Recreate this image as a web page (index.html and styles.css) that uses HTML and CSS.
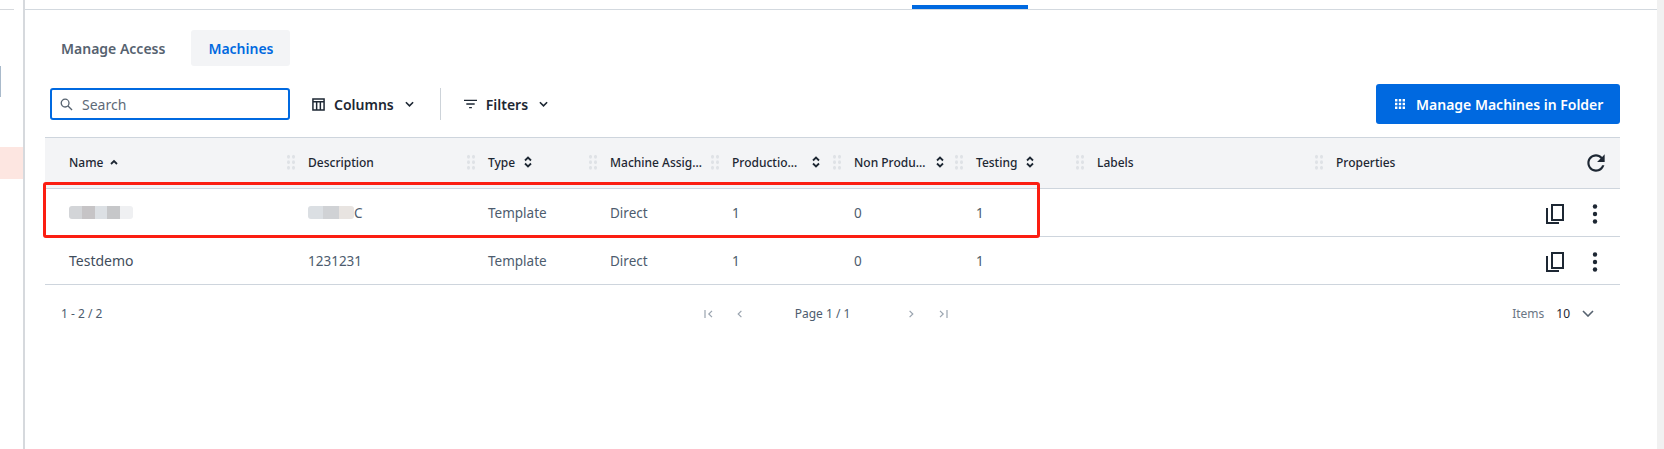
FILE: index.html
```html
<!DOCTYPE html>
<html lang="en">
<head>
<meta charset="utf-8">
<title>Machines</title>
<link rel="stylesheet" href="styles.css">
</head>
<body>
<div class="app">
  <aside class="rail">
    <div class="rail-line"></div>
    <div class="rail-mark"></div>
    <div class="rail-item"></div>
  </aside>
  <main class="main">
    <div class="topbar"><span class="top-tab"></span></div>
    <div class="content">
      <nav class="tabs">
        <span class="tab">Manage Access</span>
        <span class="tab tab-active">Machines</span>
      </nav>
      <div class="toolbar">
        <label class="search">
          <svg class="ic-search" viewBox="0 0 14 14"><circle cx="5.5" cy="5.5" r="4.2"/><path d="M8.6 8.6 13 13"/></svg>
          <span>Search</span>
        </label>
        <button class="tool tool-columns">
          <svg class="ic-columns" viewBox="0 0 14 14"><path d="M1 1h12v12H1zM1 4h12M5 4v9M9 4v9"/></svg>
          <span>Columns</span>
          <svg class="ic-chev" viewBox="0 0 10 6"><path d="M1 1l4 4 4-4"/></svg>
        </button>
        <span class="divider"></span>
        <button class="tool tool-filters">
          <svg class="ic-filter" viewBox="0 0 14 10"><path d="M0 1h14M2.5 5h9M5.5 9h3"/></svg>
          <span>Filters</span>
          <svg class="ic-chev" viewBox="0 0 10 6"><path d="M1 1l4 4 4-4"/></svg>
        </button>
        <button class="primary">
          <svg class="ic-grid" viewBox="0 0 10 10"><path d="M0 0h2.4v2.4H0zM3.8 0h2.4v2.4H3.8zM7.6 0H10v2.4H7.6zM0 3.8h2.4v2.4H0zM3.8 3.8h2.4v2.4H3.8zM7.6 3.8H10v2.4H7.6zM0 7.6h2.4V10H0zM3.8 7.6h2.4V10H3.8zM7.6 7.6H10V10H7.6z"/></svg>
          <span>Manage Machines in Folder</span>
        </button>
      </div>
      <div class="table">
        <div class="row head">
          <div class="cell first"><span>Name</span><svg class="ic-up" viewBox="0 0 8 6"><path d="M1 5l3-3 3 3"/></svg></div>
          <div class="cell hcell"><i class="handle"></i><span>Description</span></div>
          <div class="cell hcell"><i class="handle"></i><span>Type</span><svg class="ic-sort" viewBox="0 0 8 12"><path d="M1 4.5 4 1.5l3 3M1 7.5l3 3 3-3"/></svg></div>
          <div class="cell hcell"><i class="handle"></i><span class="trunc w-machine">Machine Assignment</span></div>
          <div class="cell hcell"><i class="handle"></i><span class="trunc w-prod">Production Machines</span><svg class="ic-sort" viewBox="0 0 8 12"><path d="M1 4.5 4 1.5l3 3M1 7.5l3 3 3-3"/></svg></div>
          <div class="cell hcell"><i class="handle"></i><span class="trunc w-non">Non Production Machines</span><svg class="ic-sort" viewBox="0 0 8 12"><path d="M1 4.5 4 1.5l3 3M1 7.5l3 3 3-3"/></svg></div>
          <div class="cell hcell"><i class="handle"></i><span>Testing</span><svg class="ic-sort" viewBox="0 0 8 12"><path d="M1 4.5 4 1.5l3 3M1 7.5l3 3 3-3"/></svg></div>
          <div class="cell hcell"><i class="handle"></i><span>Labels</span></div>
          <div class="cell hcell"><i class="handle"></i><span>Properties</span></div>
          <div class="cell actions">
            <svg class="ic-refresh" viewBox="0 0 24 24"><path d="M17.65 6.35C16.2 4.9 14.21 4 12 4c-4.42 0-7.99 3.58-7.99 8s3.57 8 7.99 8c3.73 0 6.84-2.55 7.73-6h-2.08c-.82 2.33-3.04 4-5.65 4-3.31 0-6-2.69-6-6s2.69-6 6-6c1.66 0 3.14.69 4.22 1.78L13 11h7V4l-2.35 2.35z"/></svg>
          </div>
        </div>
        <div class="row body">
          <div class="cell first"><span class="blur blur-name"><b></b><b></b><b></b><b></b><b></b></span></div>
          <div class="cell"><span class="desc-blur"><span class="blur blur-desc"><b></b><b></b><b></b></span><span>C</span></span></div>
          <div class="cell">Template</div>
          <div class="cell">Direct</div>
          <div class="cell">1</div>
          <div class="cell">0</div>
          <div class="cell">1</div>
          <div class="cell"></div>
          <div class="cell"></div>
          <div class="cell actions row-actions">
            <svg class="ic-copy" viewBox="0 0 18 20"><path d="M6 1h11v15H6zM1 4v15h12"/></svg>
            <svg class="ic-more" viewBox="0 0 6 20"><circle cx="3" cy="2.5" r="2.2"/><circle cx="3" cy="10" r="2.2"/><circle cx="3" cy="17.5" r="2.2"/></svg>
          </div>
        </div>
        <div class="row body">
          <div class="cell first name">Testdemo</div>
          <div class="cell">1231231</div>
          <div class="cell">Template</div>
          <div class="cell">Direct</div>
          <div class="cell">1</div>
          <div class="cell">0</div>
          <div class="cell">1</div>
          <div class="cell"></div>
          <div class="cell"></div>
          <div class="cell actions row-actions">
            <svg class="ic-copy" viewBox="0 0 18 20"><path d="M6 1h11v15H6zM1 4v15h12"/></svg>
            <svg class="ic-more" viewBox="0 0 6 20"><circle cx="3" cy="2.5" r="2.2"/><circle cx="3" cy="10" r="2.2"/><circle cx="3" cy="17.5" r="2.2"/></svg>
          </div>
        </div>
        <div class="highlight"></div>
      </div>
      <footer class="pager">
        <span class="range">1 - 2 / 2</span>
        <div class="pages">
          <svg class="ic-page" viewBox="0 0 9 8"><path d="M1 0v8M8 .8 4.8 4 8 7.2"/></svg>
          <svg class="ic-page prev" viewBox="0 0 5 8"><path d="M4.4.8 1.2 4l3.2 3.2"/></svg>
          <span class="page-label">Page 1 / 1</span>
          <svg class="ic-page next" viewBox="0 0 5 8"><path d="M.6.8 3.8 4 .6 7.2"/></svg>
          <svg class="ic-page" viewBox="0 0 9 8"><path d="M8 0v8M1 .8 4.2 4 1 7.2"/></svg>
        </div>
        <div class="items">
          <span class="items-label">Items</span>
          <span class="items-value">10</span>
          <svg class="ic-items" viewBox="0 0 12 7"><path d="M1 1l5 5 5-5"/></svg>
        </div>
      </footer>
    </div>
  </main>
  <div class="scrollbar"></div>
</div>
</body>
</html>
```
FILE: styles.css
```css
* { box-sizing: border-box; }
html, body { margin: 0; height: 100%; background: #fff; overflow: hidden; }
body { font-family: "Noto Sans", sans-serif; font-size: 13.5px; color: #4d5c6e; }
svg { display: block; flex: none; fill: none; stroke: currentColor; }
button { font: inherit; border: 0; background: none; padding: 0; display: flex; align-items: center; }

.app { display: flex; height: 449px; }

.rail { width: 25px; flex: none; border-right: 2px solid #d6d9dd; display: flex; flex-direction: column; }
.rail-line { width: 14px; height: 1px; margin-top: 9px; background: #d6d9dd; }
.rail-mark { width: 1px; height: 31px; margin-top: 56px; background: #a9bacb; }
.rail-item { height: 32px; margin-top: 50px; background: #fde6e1; }

.main { flex: 1; min-width: 0; }
.scrollbar { width: 7px; flex: none; background: #f1f1f1; }

.topbar { height: 10px; border-bottom: 1px solid #d3d9df; padding: 5px 0 0 887px; }
.top-tab { display: block; width: 116px; height: 4px; background: #0069e0; }

.content { padding: 20px 0 0 20px; width: 1595px; }

.tabs { display: flex; height: 36px; }
.tab { display: flex; align-items: center; padding: 0 17px 0 16px; font-size: 14px; font-weight: 600; color: #56626f; border-radius: 3px; }
.tab-active { margin-left: 9px; padding: 0 16px 0 17px; background: #f3f4f6; color: #0069e0; }

.toolbar { display: flex; align-items: center; height: 40px; margin-top: 18px; }
.search { width: 240px; height: 32px; margin-left: 5px; border: 2px solid #0069e0; border-radius: 3px; display: flex; align-items: center; gap: 9px; padding-left: 8px; font-size: 14px; color: #5e6a77; }
.ic-search { width: 13px; height: 13px; stroke: #56626f; stroke-width: 1.4; }
.tool { font-size: 14px; font-weight: 600; color: #1d2733; }
.tool-columns { margin-left: 22px; }
.tool-filters { margin-left: 23px; }
.ic-columns { width: 13px; height: 13px; margin-right: 9px; stroke-width: 1.6; }
.ic-filter { width: 13px; height: 10px; margin-right: 9px; stroke-width: 1.4; }
.ic-chev { width: 9px; height: 6px; margin-left: 11px; stroke-width: 1.8; }
.divider { width: 1px; height: 32px; margin-left: 26px; background: #cdd3d9; }
.primary { height: 40px; width: 244px; margin-left: auto; border-radius: 3px; background: #0069e0; color: #fff; font-size: 14px; font-weight: 600; padding-left: 19px; gap: 11px; }
.ic-grid { width: 10px; height: 10px; fill: #fff; stroke: none; }

.table { margin-top: 13px; position: relative; }
.row { display: grid; grid-template-columns: 239px 180px 122px 122px 122px 122px 121px 239px 239px 1fr; border-bottom: 1px solid #ced5dd; }
.head { height: 52px; background: #f3f4f6; border-top: 1px solid #ced5dd; font-size: 12px; font-weight: 500; color: #1d2733; }
.body { height: 48px; }
.cell { display: flex; align-items: center; padding-left: 24px; min-width: 0; }
.hcell { padding-left: 2px; }
.first { padding-left: 24px; }
.head .cell { padding-bottom: 2px; }
.head .actions { padding-bottom: 0; }
.handle { width: 10px; height: 16px; margin-right: 12px; flex: none; background-image: radial-gradient(circle, #dfe2e6 1.6px, transparent 1.8px); background-size: 5px 5.5px; }
.name { font-size: 14px; color: #3f4d5c; }
.trunc { overflow: hidden; white-space: nowrap; text-overflow: ellipsis; flex: none; }
.w-machine { width: 93px; }
.w-prod { width: 72px; }
.w-non { width: 74px; }
.ic-up { width: 8px; height: 6px; margin-left: 7px; stroke-width: 1.8; }
.ic-sort { width: 8px; height: 12px; margin-left: 9px; stroke-width: 1.8; }
.w-prod + .ic-sort { margin-left: 8px; }
.w-non + .ic-sort { margin-left: 8px; }
.actions { padding: 0; justify-content: flex-end; }
.ic-refresh { width: 26px; height: 26px; margin-right: 11px; fill: #1d2733; stroke: none; }
.row-actions { color: #1d2733; margin-left: -60px; gap: 28px; padding: 2px 22px 0 0; }
.ic-copy { width: 18px; height: 20px; stroke-width: 2; }
.ic-more { width: 6px; height: 20px; fill: currentColor; stroke: none; }

.blur { display: flex; height: 13px; overflow: hidden; border-radius: 3px; filter: blur(.6px); }
.blur b { display: block; flex: 1; }
.blur-name { width: 64px; }
.blur-name b:nth-child(1) { background: #d3d5d8; }
.blur-name b:nth-child(2) { background: #c6c4c6; }
.blur-name b:nth-child(3) { background: #dce0e4; }
.blur-name b:nth-child(4) { background: #c6c7c9; }
.blur-name b:nth-child(5) { background: #eff0f2; }
.desc-blur { display: flex; align-items: center; }
.blur-desc { width: 46px; }
.blur-desc b:nth-child(1) { background: #dbdfe3; }
.blur-desc b:nth-child(2) { background: #d0d2d5; }
.blur-desc b:nth-child(3) { background: #e8e4e1; }

.highlight { position: absolute; left: -2px; top: 45px; width: 997px; height: 56px; border: 3px solid #fb1e12; border-radius: 3px; pointer-events: none; }

.pager { display: grid; grid-template-columns: 1fr auto 1fr; align-items: center; height: 57px; font-size: 12px; }
.range { padding-left: 16px; }
.pages { display: flex; align-items: center; color: #9aa4af; margin-right: 13px; }
.page-label { color: #4d5c6e; margin: 0 59px 0 53px; }
.ic-page { width: 9px; height: 8px; stroke-width: 1.2; }
.prev { width: 5px; margin-left: 24px; }
.next { width: 5px; margin-right: 25px; }
.items { display: flex; align-items: center; justify-content: flex-end; padding-right: 26px; }
.items-label { color: #6a7684; }
.items-value { margin-left: 12px; color: #1d2733; }
.ic-items { width: 12px; height: 7px; margin-left: 12px; stroke: #56626f; stroke-width: 1.6; }
```
